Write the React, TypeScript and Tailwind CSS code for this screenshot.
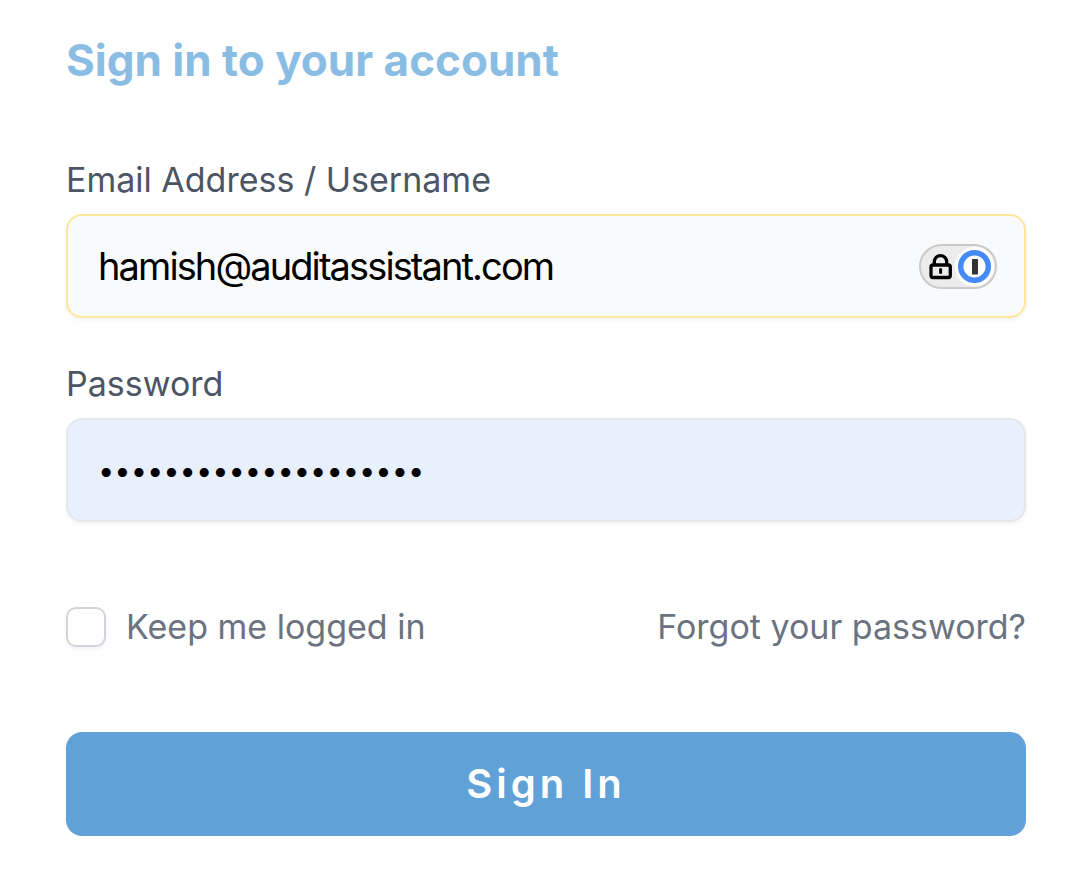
export default function App() {
  return (
    <main className="min-h-screen bg-white px-[66px] pt-8 pb-10 font-['Inter',sans-serif]">
      <h1 className="text-[44px] leading-[56px] font-bold text-[#8abde4]">Sign in to your account</h1>
      <form className="flex flex-col pt-[66px]" onSubmit={(e) => e.preventDefault()}>
        <label htmlFor="user" className="pb-2 text-[34px] leading-[52px] text-[#4b5563]">Email Address / Username</label>
        <div className="flex h-[104px] items-center rounded-2xl border-2 border-[#fde59b] bg-[#f9fafb] pr-[27px] pl-[30px] shadow-[0_2px_4px_rgba(0,0,0,0.05)]">
          <input id="user" type="text" defaultValue="hamish@auditassistant.com" className="min-w-0 flex-1 bg-transparent text-[38px] tracking-tighter text-black outline-none" />
          <button type="button" aria-label="Fill from password manager" className="shrink-0">
            <svg width="78" height="45" viewBox="0 0 78 45" fill="none">
              <rect x="1" y="1" width="76" height="43" rx="21.500" fill="#ececec" stroke="#cbcbcb" strokeWidth="2" />
              <rect x="12" y="21" width="19.300" height="12.500" rx="2" stroke="#000" strokeWidth="3.300" />
              <path d="M15.300 20v-2.200a6.200 6.200 0 0 1 12.400 0V20" stroke="#000" strokeWidth="3.300" />
              <path d="M21.600 25.500v3" stroke="#000" strokeWidth="3" strokeLinecap="round" />
              <circle cx="55.500" cy="22.500" r="19.800" fill="#fff" />
              <circle cx="55.500" cy="22.500" r="13.800" stroke="#448bf9" strokeWidth="5.500" />
              <rect x="53" y="15" width="6" height="15.500" rx="0.500" fill="#333" />
            </svg>
          </button>
        </div>
        <label htmlFor="password" className="pt-10 pb-2 text-[34px] leading-[52px] text-[#4b5563]">Password</label>
        <input id="password" type="password" defaultValue="aaaaaaaaaaaaaaaaaaaa" className="h-[104px] w-full rounded-2xl border-2 border-[#e5e7eb] bg-[#e8effd] px-[30px] text-[29px] text-black shadow-[0_2px_4px_rgba(0,0,0,0.05)] outline-none" />
        <div className="flex items-center justify-between py-20 text-[34px] leading-[50px] text-[#6b7280]">
          <label className="flex items-center gap-5">
            <input type="checkbox" className="size-10 appearance-none rounded-[10px] border-2 border-[#d1d5db] bg-white shadow-[0_2px_4px_rgba(0,0,0,0.05)] checked:bg-[#60a2d8]" />
            Keep me logged in
          </label>
          <a href="#forgot">Forgot your password?</a>
        </div>
        <button type="submit" className="h-[104px] rounded-2xl bg-[#60a2d8] text-[40px] font-semibold tracking-widest text-white">Sign In</button>
      </form>
    </main>
  );
}
